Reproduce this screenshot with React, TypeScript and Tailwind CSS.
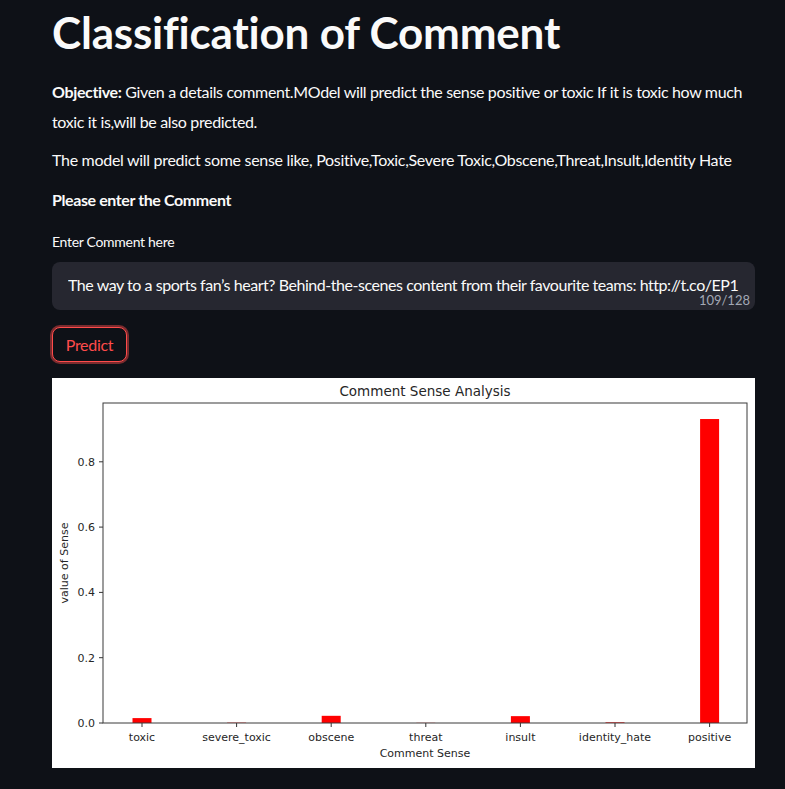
import React from "react";

type Sense = {
  label: string;
  value: number;
};

const senses: Sense[] = [
  { label: "toxic", value: 0.015 },
  { label: "severe_toxic", value: 0.001 },
  { label: "obscene", value: 0.022 },
  { label: "threat", value: 0.0005 },
  { label: "insult", value: 0.021 },
  { label: "identity_hate", value: 0.002 },
  { label: "positive", value: 0.931 },
];

// axes box inside the chart picture
const AX_LEFT = 51;
const AX_RIGHT = 695;
const AX_TOP = 25;
const AX_BOTTOM = 345;
const PER_UNIT = 326.5;
const FIRST_X = 90;
const STEP = 94.6;
const BAR_W = 19;

const SenseChart: React.FC = () => {
  const yTicks = [0, 0.2, 0.4, 0.6, 0.8];
  return (
    <svg width="703" height="390" viewBox="0 0 703 390" className="block bg-white">
      <text
        x={(AX_LEFT + AX_RIGHT) / 2}
        y="18"
        textAnchor="middle"
        fontFamily="DejaVu Sans, sans-serif"
        fontSize="13.5"
        fill="#262626"
      >
        Comment Sense Analysis
      </text>

      {senses.map((s, i) => {
        const cx = FIRST_X + i * STEP;
        const h = s.value * PER_UNIT;
        return (
          <g key={s.label}>
            <rect x={cx - BAR_W / 2} y={AX_BOTTOM - h} width={BAR_W} height={h} fill="#ff0000" />
            <line x1={cx} y1={AX_BOTTOM} x2={cx} y2={AX_BOTTOM + 4} stroke="#333" strokeWidth="1" />
            <text
              x={cx}
              y="363"
              textAnchor="middle"
              fontFamily="DejaVu Sans, sans-serif"
              fontSize="11"
              fill="#262626"
            >
              {s.label}
            </text>
          </g>
        );
      })}

      {yTicks.map((t) => {
        const y = AX_BOTTOM - t * PER_UNIT;
        return (
          <g key={t}>
            <line x1={AX_LEFT - 4} y1={y} x2={AX_LEFT} y2={y} stroke="#333" strokeWidth="1" />
            <text
              x={AX_LEFT - 8}
              y={y + 4}
              textAnchor="end"
              fontFamily="DejaVu Sans, sans-serif"
              fontSize="11"
              fill="#262626"
            >
              {t.toFixed(1)}
            </text>
          </g>
        );
      })}

      <rect
        x={AX_LEFT}
        y={AX_TOP}
        width={AX_RIGHT - AX_LEFT}
        height={AX_BOTTOM - AX_TOP}
        fill="none"
        stroke="#3a3a3a"
        strokeWidth="1"
      />

      <text
        x={(AX_LEFT + AX_RIGHT) / 2}
        y="379"
        textAnchor="middle"
        fontFamily="DejaVu Sans, sans-serif"
        fontSize="11"
        fill="#262626"
      >
        Comment Sense
      </text>
      <text
        x="16"
        y={(AX_TOP + AX_BOTTOM) / 2}
        textAnchor="middle"
        fontFamily="DejaVu Sans, sans-serif"
        fontSize="11"
        fill="#262626"
        transform={`rotate(-90 16 ${(AX_TOP + AX_BOTTOM) / 2})`}
      >
        value of Sense
      </text>
    </svg>
  );
};

const App: React.FC = () => {
  return (
    <div className="min-h-screen bg-[#0e1117] text-[#fafafa] font-['Lato','Liberation_Sans',sans-serif]">
      <div className="w-[703px] ml-[52px] pt-[5px] pb-[21px]">
        <h1 className="text-[44px] font-bold leading-[54px] tracking-[-0.2px]">
          Classification of Comment
        </h1>

        {/* intro text */}
        <p className="mt-[18px] text-[16px] leading-[30px] tracking-[-0.35px]">
          <span className="font-bold">Objective:</span> Given a details comment.MOdel will predict the sense
          positive or toxic If it is toxic how much toxic it is,will be also predicted.
        </p>
        <p className="mt-[8px] text-[16px] leading-[30px] tracking-[-0.3px]">
          The model will predict some sense like, Positive,Toxic,Severe Toxic,Obscene,Threat,Insult,Identity Hate
        </p>
        <p className="mt-[10px] text-[16px] leading-[30px] font-bold tracking-[-0.4px]">Please enter the Comment</p>

        {/* input */}
        <div className="mt-[17px] text-[14px] leading-[20px] tracking-[-0.3px]">Enter Comment here</div>
        <div className="relative mt-[10px] h-[48px] rounded-[8px] bg-[#262730] pl-[16px] pt-[11px]">
          <div className="text-[16px] leading-[24px] whitespace-nowrap overflow-hidden tracking-[-0.45px]">
            The way to a sports fan’s heart? Behind-the-scenes content from their favourite teams: http://t.co/EP1
          </div>
          <span className="absolute right-[5px] bottom-[2px] text-[13px] leading-[16px] text-[#a3a8b4]">
            109/128
          </span>
        </div>

        <button className="mt-[17px] h-[35px] w-[75px] rounded-[8px] border border-[#ff4b4b] bg-[#0e1117] text-[16px] text-[#ff4b4b] tracking-[-0.3px] shadow-[0_0_0_2px_rgba(255,75,75,0.45)]">
          Predict
        </button>

        <div className="mt-[16px]">
          <SenseChart />
        </div>
      </div>
    </div>
  );
};

export default App;
